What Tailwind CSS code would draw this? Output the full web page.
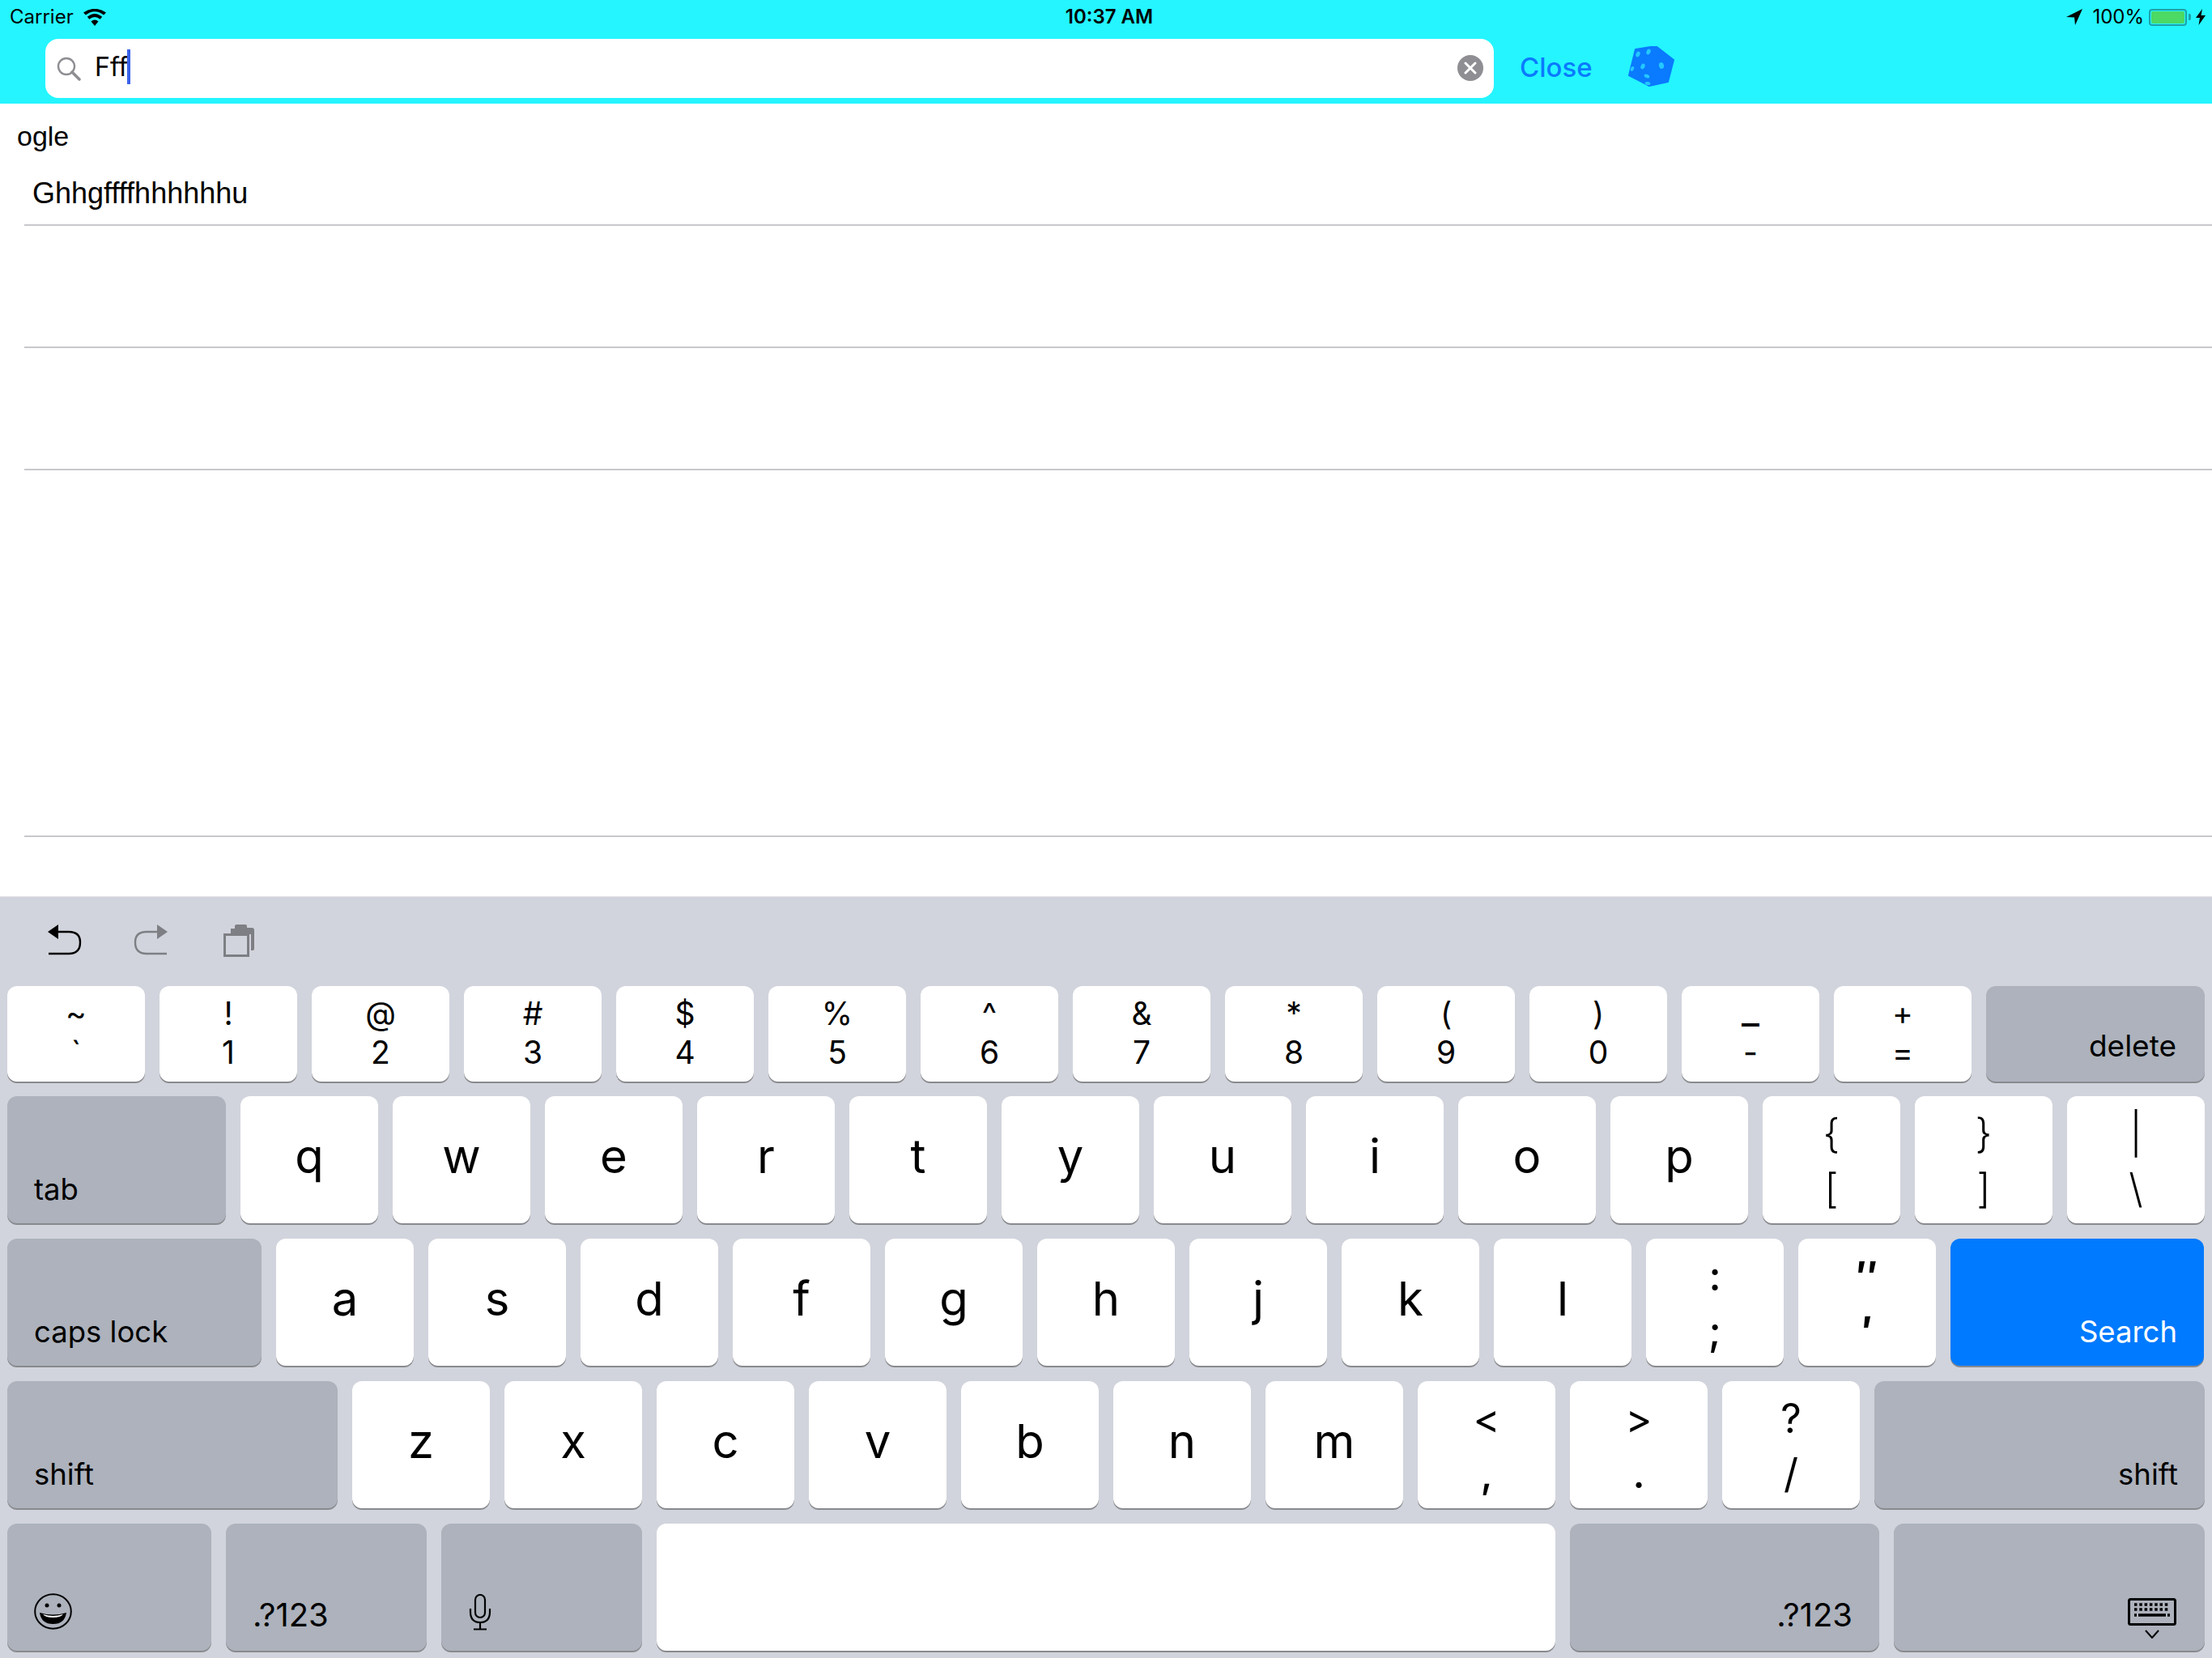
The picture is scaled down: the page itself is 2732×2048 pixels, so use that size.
<!DOCTYPE html>
<html><head><meta charset="utf-8"><script src="https://cdn.jsdelivr.net/npm/@tailwindcss/browser@4"></script></head>
<body class="m-0">
<div class="w-[2732px] h-[2048px] flex flex-col bg-white overflow-hidden text-black font-['Inter','Liberation_Sans',sans-serif]">
  <!-- top bar -->
  <header class="h-[128px] bg-[#24f5ff] flex flex-col shrink-0">
    <div class="h-[48px] grid grid-cols-3 items-center pl-[12px] pr-[8px] pb-[6px] text-[24px]">
      <div class="flex items-center gap-[11px]"><span>Carrier</span>
        <svg width="30" height="21" viewBox="0 0 30 21"><path d="M15 21 L10.5 15.5 Q15 11.5 19.500 15.5 Z M8.300 12.800 L5.800 9.800 Q15 2 24.200 9.800 L21.700 12.800 Q15 7.300 8.300 12.800 Z M3.800 7.500 L1 4.600 Q15 -5 29 4.600 L26.200 7.500 Q15 -1 3.800 7.500 Z" fill="#000"/></svg>
      </div>
      <div class="text-center font-semibold text-[24px] pl-[4px]">10:37 AM</div>
      <div class="flex items-center justify-end gap-[12px]">
        <svg width="20" height="20" viewBox="0 0 20 20"><path d="M20 0 L0 10 L10 10.500 L11 20 Z" fill="#000"/></svg>
        <div class="flex items-center gap-[6px]"><span>100%</span>
          <div class="flex items-center gap-[2px]">
            <div class="w-[47px] h-[21px] border-[2px] border-[#1ca2ac] rounded-[4px] p-[1px]"><div class="w-full h-full bg-[#4cd964] rounded-[2px]"></div></div>
            <div class="w-[3px] h-[8px] bg-[#1ca2ac] rounded-r-[2px]"></div>
          </div>
          <svg width="12" height="20" viewBox="0 0 12 20" class="ml-[0px]"><path d="M8 0 L0 11 L5 11 L3.500 20 L12 8 L6.500 8 Z" fill="#000"/></svg>
        </div>
      </div>
    </div>
    <div class="flex items-start pl-[56px]">
      <div class="w-[1789px] h-[73px] bg-white rounded-[16px] flex items-center relative">
        <svg width="30" height="30" viewBox="0 0 30 30" class="ml-[14px]"><circle cx="12" cy="12" r="10" fill="none" stroke="#8e8e93" stroke-width="2.400"/><path d="M19 19 L28 28" stroke="#8e8e93" stroke-width="3.500" stroke-linecap="round"/></svg>
        <span class="ml-[17px] mb-[3px] text-[32px] leading-none">Fff</span>
        <div class="w-[4px] h-[43px] bg-[#3a62ea] ml-[-1px] mb-[4px]"></div>
        <div class="absolute right-[13px] top-[20px] w-[32px] h-[32px] rounded-full bg-[#8e8e93] flex items-center justify-center">
          <svg width="16" height="16" viewBox="0 0 16 16"><path d="M2 2 L14 14 M14 2 L2 14" stroke="#fff" stroke-width="3" stroke-linecap="round"/></svg>
        </div>
      </div>
      <span class="ml-[32px] mt-[15px] text-[33px] font-medium leading-[40px] text-[#0a7aff]">Close</span>
      <svg width="58" height="52" viewBox="0 0 58 52" class="ml-[44px] mt-[9px]">
        <path d="M9 4 L34 0 L56 17 L49 44 L26 49 L1 36 Z" fill="#0a7aff" stroke="#0a7aff" stroke-width="2" stroke-linejoin="round"/>
        <g fill="#24c8ff"><ellipse cx="12" cy="10" rx="2.500" ry="3.500" transform="rotate(25 12 10)"/><ellipse cx="25" cy="7" rx="2.500" ry="3.500" transform="rotate(25 25 7)"/><ellipse cx="41" cy="24" rx="3" ry="4" transform="rotate(-15 41 24)"/><ellipse cx="18" cy="25" rx="2.500" ry="3.500" transform="rotate(25 18 25)"/><ellipse cx="5" cy="28" rx="2" ry="3" transform="rotate(25 5 28)"/><ellipse cx="23" cy="37" rx="3.500" ry="2.200" transform="rotate(25 23 37)"/><ellipse cx="24" cy="46" rx="3.500" ry="2" transform="rotate(10 24 46)"/></g>
      </svg>
    </div>
  </header>

  <!-- list -->
  <main class="flex-1 flex flex-col font-['Liberation_Sans',sans-serif] text-[36px]">
    <div class="h-[68px] pl-[21px] pt-[20px] leading-[40px] text-[34px]">ogle</div>
    <div class="ml-[30px] h-[83px] border-b-2 border-[#c8c7cc] pl-[10px] pt-[23px] leading-[40px]">Ghhgffffhhhhhhu</div>
    <div class="ml-[30px] h-[151px] border-b-2 border-[#c8c7cc]"></div>
    <div class="ml-[30px] h-[151px] border-b-2 border-[#c8c7cc]"></div>
    <div class="ml-[30px] h-[453px] border-b-2 border-[#c8c7cc]"></div>
  </main>

  <!-- keyboard -->
  <section class="h-[941px] shrink-0 bg-[#d1d4dc] border-t border-[#e4e4e7] px-[9px] flex flex-col">
    <div class="h-[110px] flex items-start pt-[34px] pl-[48px] gap-[64px]">
      <svg width="44" height="38" viewBox="0 0 44 38"><path d="M2 9 L15 0 L15 18 Z" fill="#000"/><path d="M12 9 H28 Q42 9 42 22 Q42 36 28 36 H3" fill="none" stroke="#000" stroke-width="2.400"/></svg>
      <svg width="44" height="38" viewBox="0 0 44 38"><path d="M42 9 L29 0 L29 18 Z" fill="#7d7f84"/><path d="M32 9 H16 Q2 9 2 22 Q2 36 16 36 H41" fill="none" stroke="#7d7f84" stroke-width="2.400"/></svg>
      <svg width="40" height="40" viewBox="0 0 40 40" class="ml-[3px]"><path d="M9 5 H14 V2 Q14 0 16 0 H27 Q29 0 29 2 V4 H35 Q38 4 38 7 V30 Q38 32 36 32 H34 V12 H9 Z" fill="#7d7f84"/><rect x="1.500" y="12.500" width="29" height="26" fill="none" stroke="#7d7f84" stroke-width="3"/></svg>
    </div>
    <div class="flex flex-col gap-[19px]">
      <!-- row 1 -->
      <div class="flex gap-[18px] text-[39px] leading-[48px] text-center mb-[-1px]">
        <div class="w-[170px] h-[118px] pt-[10px] bg-white rounded-[12px] shadow-[0_2px_0_#898a8e]">~<br>`</div>
        <div class="w-[170px] h-[118px] pt-[10px] bg-white rounded-[12px] shadow-[0_2px_0_#898a8e]">!<br>1</div>
        <div class="w-[170px] h-[118px] pt-[10px] bg-white rounded-[12px] shadow-[0_2px_0_#898a8e]">@<br>2</div>
        <div class="w-[170px] h-[118px] pt-[10px] bg-white rounded-[12px] shadow-[0_2px_0_#898a8e]">#<br>3</div>
        <div class="w-[170px] h-[118px] pt-[10px] bg-white rounded-[12px] shadow-[0_2px_0_#898a8e]">$<br>4</div>
        <div class="w-[170px] h-[118px] pt-[10px] bg-white rounded-[12px] shadow-[0_2px_0_#898a8e]">%<br>5</div>
        <div class="w-[170px] h-[118px] pt-[10px] bg-white rounded-[12px] shadow-[0_2px_0_#898a8e]">^<br>6</div>
        <div class="w-[170px] h-[118px] pt-[10px] bg-white rounded-[12px] shadow-[0_2px_0_#898a8e]">&amp;<br>7</div>
        <div class="w-[170px] h-[118px] pt-[10px] bg-white rounded-[12px] shadow-[0_2px_0_#898a8e]">*<br>8</div>
        <div class="w-[170px] h-[118px] pt-[10px] bg-white rounded-[12px] shadow-[0_2px_0_#898a8e]">(<br>9</div>
        <div class="w-[170px] h-[118px] pt-[10px] bg-white rounded-[12px] shadow-[0_2px_0_#898a8e]">)<br>0</div>
        <div class="w-[170px] h-[118px] pt-[10px] bg-white rounded-[12px] shadow-[0_2px_0_#898a8e]"><span class="block relative top-[-5px] text-[48px]">_</span>-</div>
        <div class="w-[170px] h-[118px] pt-[10px] bg-white rounded-[12px] shadow-[0_2px_0_#898a8e]">+<br>=</div>
        <div class="w-[270px] h-[118px] bg-[#adb2bc] rounded-[12px] shadow-[0_2px_0_#898a8e] text-right pr-[35px] pt-[50px] text-[37px]">delete</div>
      </div>
      <!-- row 2 -->
      <div class="flex gap-[18px] text-[58px] leading-[148px] text-center">
        <div class="w-[270px] h-[157px] bg-[#adb2bc] rounded-[12px] shadow-[0_2px_0_#898a8e] text-left pl-[33px] pt-[91px] text-[36.5px] leading-[48px]">tab</div>
        <div class="w-[170px] h-[157px] bg-white rounded-[12px] shadow-[0_2px_0_#898a8e]">q</div>
        <div class="w-[170px] h-[157px] bg-white rounded-[12px] shadow-[0_2px_0_#898a8e]">w</div>
        <div class="w-[170px] h-[157px] bg-white rounded-[12px] shadow-[0_2px_0_#898a8e]">e</div>
        <div class="w-[170px] h-[157px] bg-white rounded-[12px] shadow-[0_2px_0_#898a8e]">r</div>
        <div class="w-[170px] h-[157px] bg-white rounded-[12px] shadow-[0_2px_0_#898a8e]">t</div>
        <div class="w-[170px] h-[157px] bg-white rounded-[12px] shadow-[0_2px_0_#898a8e]">y</div>
        <div class="w-[170px] h-[157px] bg-white rounded-[12px] shadow-[0_2px_0_#898a8e]">u</div>
        <div class="w-[170px] h-[157px] bg-white rounded-[12px] shadow-[0_2px_0_#898a8e]">i</div>
        <div class="w-[170px] h-[157px] bg-white rounded-[12px] shadow-[0_2px_0_#898a8e]">o</div>
        <div class="w-[170px] h-[157px] bg-white rounded-[12px] shadow-[0_2px_0_#898a8e]">p</div>
        <div class="w-[170px] h-[157px] pt-[12px] text-[50px] font-[350] leading-[68px] bg-white rounded-[12px] shadow-[0_2px_0_#898a8e]">{<br>[</div>
        <div class="w-[170px] h-[157px] pt-[12px] text-[50px] font-[350] leading-[68px] bg-white rounded-[12px] shadow-[0_2px_0_#898a8e]">}<br>]</div>
        <div class="w-[170px] h-[157px] pt-[12px] text-[50px] font-[350] leading-[68px] bg-white rounded-[12px] shadow-[0_2px_0_#898a8e]">|<br>\</div>
      </div>
      <!-- row 3 -->
      <div class="flex gap-[18px] text-[58px] leading-[148px] text-center">
        <div class="w-[314px] h-[157px] bg-[#adb2bc] rounded-[12px] shadow-[0_2px_0_#898a8e] text-left pl-[33px] pt-[91px] text-[36.5px] leading-[48px]">caps lock</div>
        <div class="w-[170px] h-[157px] bg-white rounded-[12px] shadow-[0_2px_0_#898a8e]">a</div>
        <div class="w-[170px] h-[157px] bg-white rounded-[12px] shadow-[0_2px_0_#898a8e]">s</div>
        <div class="w-[170px] h-[157px] bg-white rounded-[12px] shadow-[0_2px_0_#898a8e]">d</div>
        <div class="w-[170px] h-[157px] bg-white rounded-[12px] shadow-[0_2px_0_#898a8e]">f</div>
        <div class="w-[170px] h-[157px] bg-white rounded-[12px] shadow-[0_2px_0_#898a8e]">g</div>
        <div class="w-[170px] h-[157px] bg-white rounded-[12px] shadow-[0_2px_0_#898a8e]">h</div>
        <div class="w-[170px] h-[157px] bg-white rounded-[12px] shadow-[0_2px_0_#898a8e]">j</div>
        <div class="w-[170px] h-[157px] bg-white rounded-[12px] shadow-[0_2px_0_#898a8e]">k</div>
        <div class="w-[170px] h-[157px] bg-white rounded-[12px] shadow-[0_2px_0_#898a8e]">l</div>
        <div class="w-[170px] h-[157px] pt-[12px] text-[50px] font-medium leading-[68px] bg-white rounded-[12px] shadow-[0_2px_0_#898a8e]">:<br>;</div>
        <div class="w-[170px] h-[157px] pt-[12px] text-[50px] font-bold leading-[68px] bg-white rounded-[12px] shadow-[0_2px_0_#898a8e]">″<br>′</div>
        <div class="w-[313px] h-[157px] bg-[#007aff] text-white rounded-[12px] shadow-[0_2px_0_#898a8e] text-right pr-[33px] pt-[91px] text-[36.5px] leading-[48px]">Search</div>
      </div>
      <!-- row 4 -->
      <div class="flex gap-[18px] text-[58px] leading-[148px] text-center">
        <div class="w-[408px] h-[157px] bg-[#adb2bc] rounded-[12px] shadow-[0_2px_0_#898a8e] text-left pl-[33px] pt-[91px] text-[36.5px] leading-[48px]">shift</div>
        <div class="w-[170px] h-[157px] bg-white rounded-[12px] shadow-[0_2px_0_#898a8e]">z</div>
        <div class="w-[170px] h-[157px] bg-white rounded-[12px] shadow-[0_2px_0_#898a8e]">x</div>
        <div class="w-[170px] h-[157px] bg-white rounded-[12px] shadow-[0_2px_0_#898a8e]">c</div>
        <div class="w-[170px] h-[157px] bg-white rounded-[12px] shadow-[0_2px_0_#898a8e]">v</div>
        <div class="w-[170px] h-[157px] bg-white rounded-[12px] shadow-[0_2px_0_#898a8e]">b</div>
        <div class="w-[170px] h-[157px] bg-white rounded-[12px] shadow-[0_2px_0_#898a8e]">n</div>
        <div class="w-[170px] h-[157px] bg-white rounded-[12px] shadow-[0_2px_0_#898a8e]">m</div>
        <div class="w-[170px] h-[157px] pt-[12px] text-[50px] leading-[68px] bg-white rounded-[12px] shadow-[0_2px_0_#898a8e]">&lt;<br><span class="font-medium">,</span></div>
        <div class="w-[170px] h-[157px] pt-[12px] text-[50px] leading-[68px] bg-white rounded-[12px] shadow-[0_2px_0_#898a8e]">&gt;<br><span class="font-medium">.</span></div>
        <div class="w-[170px] h-[157px] pt-[12px] text-[50px] leading-[68px] bg-white rounded-[12px] shadow-[0_2px_0_#898a8e]">?<br>/</div>
        <div class="w-[408px] h-[157px] bg-[#adb2bc] rounded-[12px] shadow-[0_2px_0_#898a8e] text-right pr-[33px] pt-[91px] text-[36.5px] leading-[48px]">shift</div>
      </div>
      <!-- row 5 -->
      <div class="flex gap-[18px] text-[40px] leading-[48px]">
        <div class="w-[252px] h-[157px] bg-[#adb2bc] rounded-[12px] shadow-[0_2px_0_#898a8e] pl-[33px] pt-[86px]">
          <svg width="47" height="45" viewBox="0 0 47 45"><ellipse cx="23.500" cy="22.500" rx="22.300" ry="21.300" fill="none" stroke="#000" stroke-width="2"/><circle cx="16" cy="15" r="2.500"/><circle cx="31" cy="15" r="2.500"/><path d="M7 24 Q23.500 29 40 24 Q38 38 23.500 38 Q9 38 7 24 Z" fill="#000"/><path d="M11 26 Q23.500 30 36 26 Q33 30 23.500 30 Q14 30 11 26 Z" fill="#fff"/></svg>
        </div>
        <div class="w-[248px] h-[157px] bg-[#adb2bc] rounded-[12px] shadow-[0_2px_0_#898a8e] pl-[33px] pt-[89px]">.?123</div>
        <div class="w-[248px] h-[157px] bg-[#adb2bc] rounded-[12px] shadow-[0_2px_0_#898a8e] pl-[34px] pt-[87px]">
          <svg width="28" height="45" viewBox="0 0 28 45" fill="none" stroke="#000" stroke-width="2.200"><rect x="8" y="1" width="12" height="28" rx="6"/><path d="M2 18 V22 Q2 35 14 35 Q26 35 26 22 V18 M14 35 V43 M6 43.500 H22"/></svg>
        </div>
        <div class="w-[1110px] h-[157px] bg-white rounded-[12px] shadow-[0_2px_0_#898a8e]"></div>
        <div class="w-[382px] h-[157px] bg-[#adb2bc] rounded-[12px] shadow-[0_2px_0_#898a8e] text-right pr-[33px] pt-[89px]">.?123</div>
        <div class="w-[384px] h-[157px] bg-[#adb2bc] rounded-[12px] shadow-[0_2px_0_#898a8e] flex justify-end pr-[35px] pt-[92px]">
          <svg width="60" height="50" viewBox="0 0 60 50"><rect x="1.500" y="1.500" width="57" height="31" rx="2" fill="none" stroke="#000" stroke-width="3"/><path d="M8 8 H52 M8 14 H52" stroke="#000" stroke-width="3.500" stroke-dasharray="3.500 2.800"/><path d="M8 21 H52" stroke="#000" stroke-width="3.500" stroke-dasharray="3 2 34 2 3 2"/><path d="M22 40 L30 49 L38 40" fill="none" stroke="#000" stroke-width="2"/></svg>
        </div>
      </div>
    </div>
  </section>
</div>
</body></html>
